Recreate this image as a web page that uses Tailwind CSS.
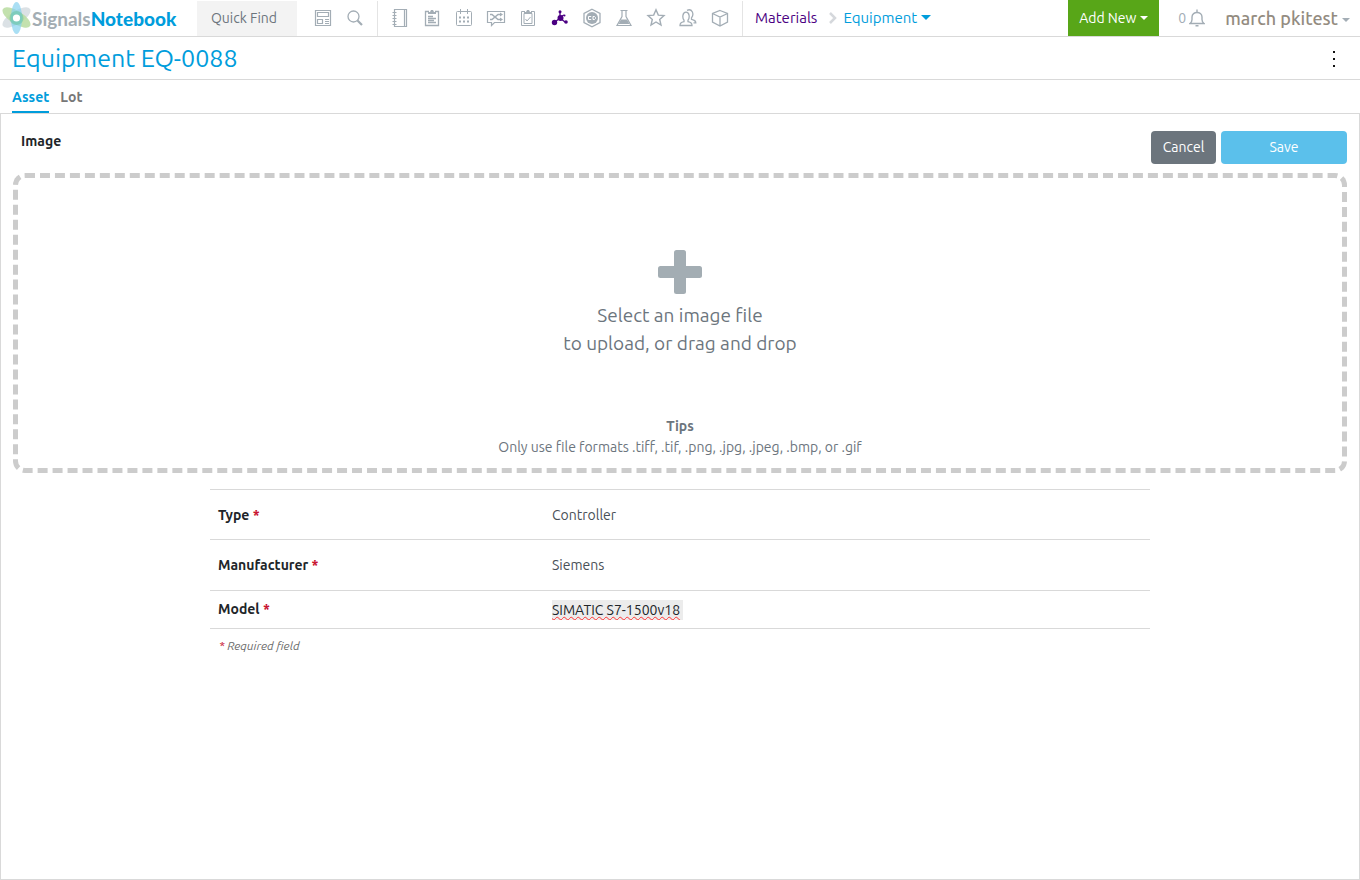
<!DOCTYPE html>
<html lang="en">
<head>
<meta charset="utf-8">
<meta name="viewport" content="width=device-width, initial-scale=1">
<title>Equipment EQ-0088</title>
<script src="https://cdn.jsdelivr.net/npm/@tailwindcss/browser@4"></script>
</head>
<body class="flex min-h-screen flex-col bg-white font-['Ubuntu','Noto_Sans',sans-serif] text-sm text-[#212529]">

<header class="flex h-[37px] shrink-0 items-center border-b border-[#d9d9d9]">
  <a href="#" class="flex w-[197px] shrink-0 items-center pl-[2px] font-['Lato',sans-serif] text-[19px] leading-none" aria-label="Signals Notebook">
    <svg class="h-[34px] w-[30px] shrink-0" viewBox="0 0 30 34" aria-hidden="true">
      <ellipse cx="14.500" cy="16.500" rx="16" ry="6.500" fill="#dbe1e5" transform="rotate(-32 14.500 16.500)"/>
      <ellipse cx="14.500" cy="16.500" rx="16" ry="6.500" fill="#b9dca0" fill-opacity=".85" transform="rotate(32 14.500 16.500)"/>
      <ellipse cx="14.500" cy="17" rx="5.500" ry="16" fill="#86d2f0" fill-opacity=".7"/>
      <circle cx="14.500" cy="17" r="7" fill="#6cc6a8" fill-opacity=".6"/>
      <circle cx="14.500" cy="17" r="3.600" fill="#fff"/>
    </svg>
    <span class="font-bold text-[#a3adb3]">Signals</span><span class="font-black text-[#009ddc]">Notebook</span>
  </a>
  <button class="mt-px h-[35px] w-[100px] shrink-0 bg-[#f3f3f3] pb-[2px] pl-[14px] text-left text-[#6c757d]">Quick Find</button>
  <nav class="ml-[10px] flex shrink-0 items-center text-[#a3adb5]" aria-label="Search">
    <a href="#" class="flex w-8 justify-center" aria-label="Dashboard"><svg class="h-5 w-5" viewBox="0 0 20 20" fill="none" stroke="currentColor" stroke-width="1.200"><path d="M2.500 2.500h15v15h-15zM4.500 4.500h11v4h-11zM4.500 11.500h5v4h-5zM12 11.500h4M12 13.500h4M12 15.500h4"/></svg></a>
    <a href="#" class="flex w-8 justify-center" aria-label="Search"><svg class="h-5 w-5" viewBox="0 0 20 20" fill="none" stroke="currentColor" stroke-width="1.300"><circle cx="8.500" cy="8.500" r="5.500"/><path d="M12.500 12.500l4.500 4.500" stroke-width="2.200"/></svg></a>
  </nav>
  <nav class="ml-[6px] flex h-[35px] shrink-0 items-center border-x border-[#e4e4e4] px-[6px] text-[#a3adb5]" aria-label="Sections">
    <a href="#" class="flex w-8 justify-center" aria-label="Notebooks"><svg class="h-5 w-5" viewBox="0 0 20 20" fill="none" stroke="currentColor" stroke-width="1.200"><path d="M4.500 1.500h12v17h-12zM14.500 1.500v17M2.500 4.500h4M2.500 7.500h4M2.500 10.500h4M2.500 13.500h4M2.500 16.500h4"/></svg></a>
    <a href="#" class="flex w-8 justify-center" aria-label="Tasks"><svg class="h-5 w-5" viewBox="0 0 20 20" fill="none" stroke="currentColor" stroke-width="1.300"><path d="M7 3.500H3.500v14h13v-14H13M6 8.500h5M6 10.500h8M6 12.500h6M6 14.500h8"/><path d="M6 6V4h2l1-2h2l1 2h2v2z" fill="currentColor" stroke="none"/></svg></a>
    <a href="#" class="flex w-8 justify-center" aria-label="Calendar"><svg class="h-5 w-5" viewBox="0 0 20 20" fill="none" stroke="currentColor"><rect x="2.500" y="3.500" width="15" height="14" rx="1"/><path d="M6.500 1v5M13.500 1v5"/><path d="M5 9.500h10M5 13.500h10" stroke-width="2" stroke-dasharray="2"/></svg></a>
    <a href="#" class="flex w-8 justify-center" aria-label="Requests"><svg class="h-5 w-5" viewBox="0 0 20 20" fill="none" stroke="currentColor" stroke-width="1.200"><path d="M1.500 3.500h17v11h-10l-3 3v-3h-4z"/><path d="M4 6.500h2l6 5h3M4 11.500h2l6-5h3" stroke-width="1.500"/><path d="M14 4.500l3 2-3 2zM14 9.500l3 2-3 2z" fill="currentColor" stroke="none"/></svg></a>
    <a href="#" class="flex w-8 justify-center" aria-label="Reviews"><svg class="h-5 w-5" viewBox="0 0 20 20" fill="none" stroke="currentColor"><path d="M7 3.500H3.500v14h13v-14H13M6 5.500v10h8v-10M7.500 11l1.500 2 3.500-4"/><path d="M6 6V4h2l1-2h2l1 2h2v2z" fill="currentColor" stroke="none"/></svg></a>
    <a href="#" class="flex w-8 justify-center text-[#4b0082]" aria-label="Materials"><svg class="h-5 w-5" viewBox="0 0 20 20" fill="currentColor" stroke="currentColor"><path d="M5 14l5-4 5 4M10 10V4M10 9l4-2" fill="none" stroke-width="1.300"/><g stroke="none"><circle cx="10.500" cy="10" r="3"/><circle cx="4.500" cy="14.500" r="2.700"/><circle cx="16" cy="14" r="1.800"/><circle cx="10" cy="3.800" r="1.500"/><circle cx="14.500" cy="7.500" r="1"/></g></svg></a>
    <a href="#" class="flex w-8 justify-center" aria-label="ChemDraw"><svg class="h-5 w-5" viewBox="0 0 20 20" fill="none" stroke="currentColor" stroke-width="1.300"><path d="M10 1.200l8 4.300v9l-8 4.300-8-4.300v-9z"/><circle cx="10" cy="10" r="6" fill="currentColor" stroke="none"/><path d="M9.200 8.500H6.500v3h2.700M11 8.500h1.500l1 1v1l-1 1H11z" stroke="#fff" stroke-width="1"/></svg></a>
    <a href="#" class="flex w-8 justify-center" aria-label="Experiments"><svg class="h-5 w-5" viewBox="0 0 20 20" fill="none" stroke="currentColor" stroke-width="1.200"><path d="M6.500 2.500h7M8 2.500v6l-5 9h14l-5-9v-6"/><path d="M7 11.500h6l2.500 4.500h-11z" fill="currentColor" stroke="none"/></svg></a>
    <a href="#" class="flex w-8 justify-center" aria-label="Favorites"><svg class="h-5 w-5" viewBox="0 0 20 20" fill="none" stroke="currentColor" stroke-width="1.400"><path d="M10 1.800l2.300 5.300 5.700.5-4.300 3.800 1.300 5.600-5-3-5 3 1.300-5.600L2 7.600l5.700-.5z"/></svg></a>
    <a href="#" class="flex w-8 justify-center" aria-label="People"><svg class="h-5 w-5" viewBox="0 0 20 20" fill="none" stroke="currentColor" stroke-width="1.300"><path d="M2 17.500c0-2.500 1-3 4-3.800v-1.500C4.200 10 4.300 4.200 8 4.200s3.800 5.800 2 8v1.500c3 .8 4 1.300 4 3.800zM9 2.300c5-2.300 7.500 3.700 4.500 7.500v1.500c3 .8 4.300 1.200 4.300 3.500h-2.300"/></svg></a>
    <a href="#" class="flex w-8 justify-center" aria-label="Inventory"><svg class="h-5 w-5" viewBox="0 0 20 20" fill="none" stroke="currentColor" stroke-width="1.300"><path d="M10 2.500l7.500 3v8.500L10 18l-7.500-4V5.500zM2.500 5.500L10 9l7.500-3.500M10 9v9"/></svg></a>
  </nav>
  <nav class="ml-3 flex items-center text-[15px]" aria-label="Breadcrumb">
    <a href="#" class="text-[#4b0082]">Materials</a>
    <svg class="ml-3 mr-[6px] h-3 w-2" viewBox="0 0 8 12" fill="none" stroke="#d5d8dc" stroke-width="2.500" aria-hidden="true"><path d="M1 1l5 5-5 5"/></svg>
    <button class="flex items-center gap-1 text-[#009ddc]">Equipment <svg class="h-[5px] w-[10px]" viewBox="0 0 10 5" fill="currentColor"><path d="M0 0h10L5 5z"/></svg></button>
  </nav>
  <button class="ml-auto flex h-9 w-[91px] shrink-0 items-center justify-center gap-1 bg-[#58a618] text-white">Add New <svg class="h-1 w-2" viewBox="0 0 8 4" fill="currentColor"><path d="M0 0h8L4 4z"/></svg></button>
  <button class="ml-[19px] flex shrink-0 items-center gap-[3px] text-[#a3adb5]" aria-label="0 notifications">0 <svg class="h-[18px] w-4" viewBox="0 0 16 18" fill="none" stroke="currentColor" stroke-width="1.400"><path d="M1 14.500h14c-1.500-1-2-2-2-4V8c0-6-10-6-10 0v2.500c0 2-.5 3-2 4z"/><path d="M8 3V.5M6.500 16.800h3"/></svg></button>
  <button class="mr-[10px] ml-5 flex shrink-0 items-center gap-1 text-lg leading-6 font-medium text-[#938b80]">march pkitest <svg class="mt-[3px] h-1 w-2" viewBox="0 0 8 4" fill="#a3adb5"><path d="M0 0h8L4 4z"/></svg></button>
</header>

<div class="flex h-[43px] shrink-0 items-center justify-between border-b border-[#d9d9d9] pl-3 pr-[18px]">
  <h1 class="text-[25px] leading-8 text-[#009ddc]">Equipment EQ-0088</h1>
  <button class="flex h-6 w-4 items-center justify-center" aria-label="More actions"><svg class="h-5 w-1" viewBox="0 0 4 20" fill="#111"><path d="M1 3h2v2H1zM1 10h2v2H1zM1 17h2v2H1z"/></svg></button>
</div>

<nav class="flex h-[33px] shrink-0 gap-[11px] px-3 font-bold" aria-label="Views">
  <a href="#" class="flex items-center border-b-2 border-[#009ddc] pt-[2px] text-[#009ddc]">Asset</a>
  <a href="#" class="flex items-center border-b-2 border-transparent pt-[2px] text-[#777]">Lot</a>
</nav>

<main class="flex-1 border border-[#d9d9d9] px-3 pt-[17px]">
  <div class="flex h-[42px] items-start justify-between">
    <h2 class="pl-2 font-bold">Image</h2>
    <div class="flex gap-[5px] text-white">
      <button class="h-[33px] w-[65px] rounded bg-[#6c757d] pb-px">Cancel</button>
      <button class="h-[33px] w-[126px] rounded bg-[#5bc0eb] pb-px">Save</button>
    </div>
  </div>
  <button class="flex h-[300px] w-full flex-col items-center rounded-xl border-[5px] border-dashed border-[#ccc] pt-[72px] text-[#6c757d]">
    <svg class="h-11 w-11 shrink-0" viewBox="0 0 44 44" fill="#a3adb3" aria-hidden="true"><rect x="16" width="12" height="44" rx="2.500"/><rect y="16" width="44" height="12" rx="2.500"/></svg>
    <span class="mt-[7px] text-[19px] leading-7">Select an image file<br>to upload, or drag and drop</span>
    <span class="mt-[59px] font-bold leading-[21px]">Tips</span>
    <span class="leading-[21px]">Only use file formats .tiff, .tif, .png, .jpg, .jpeg, .bmp, or .gif</span>
  </button>

  <div class="mx-auto mt-4 max-w-[940px]">
    <table class="w-full table-fixed border-collapse text-left">
      <tbody>
        <tr class="h-[50px] border-y border-[#d9d9d9]"><th class="w-[334px] px-2 font-bold" scope="row">Type <span class="text-[#c8102e]">*</span></th><td class="px-2 text-[#495057]">Controller</td></tr>
        <tr class="h-[51px] border-y border-[#d9d9d9]"><th class="px-2 font-bold" scope="row">Manufacturer <span class="text-[#c8102e]">*</span></th><td class="px-2 text-[#495057]">Siemens</td></tr>
        <tr class="h-[38px] border-y border-[#d9d9d9]"><th class="px-2 pb-[2px] font-bold" scope="row"><label for="model">Model <span class="text-[#c8102e]">*</span></label></th><td class="px-2"><input id="model" class="block h-5 w-[131px] bg-[#ececec] underline decoration-[#f33] decoration-wavy decoration-1 underline-offset-1 outline-none" value="SIMATIC S7-1500v18" spellcheck="false"></td></tr>
      </tbody>
    </table>
    <p class="mt-[7px] pl-[9px] text-xs leading-5 text-[#6c6c6c] italic"><span class="text-[#c8102e]">*</span> Required field</p>
  </div>
</main>
</body>
</html>
